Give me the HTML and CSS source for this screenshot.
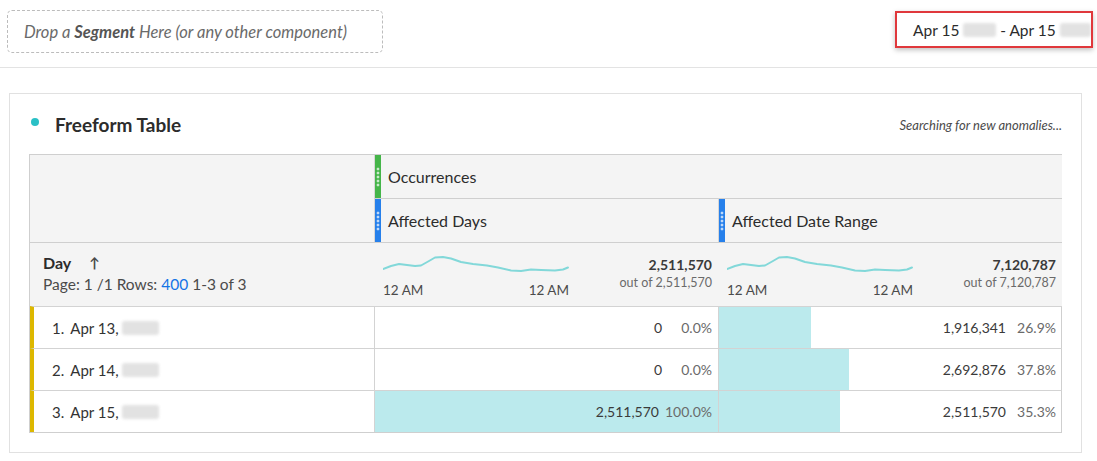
FILE: index.html
```html
<!DOCTYPE html>
<html>
<head>
<meta charset="utf-8">
<link rel="stylesheet" href="styles.css">
</head>
<body>
<div class="topbar">
  <div class="dropzone">Drop a <b>Segment</b> Here (or any other component)</div>
  <div class="daterange">Apr 15 <span class="blur b1"></span> - Apr 15 <span class="blur b2"></span></div>
</div>
<div class="panel">
  <div class="panel-head">
    <div class="title"><span class="dot"></span>Freeform Table</div>
    <div class="anom">Searching for new anomalies...</div>
  </div>
  <div class="ft">
    <div class="corner"></div>
    <div class="mh span2"><span class="marker green"><span class="dots"></span></span>Occurrences</div>
    <div class="mh r2"><span class="marker blue"><span class="dots"></span></span>Affected Days</div>
    <div class="mh r2"><span class="marker blue"><span class="dots"></span></span>Affected Date Range</div>

    <div class="dayhead">
      <div class="dayline"><b>Day</b><span class="arrow">&#8593;</span></div>
      <div class="pager">Page: 1 /1 Rows: <span class="link">400</span> 1-3 of 3</div>
    </div>
    <div class="spark">
      <div class="sp-left">
        <svg width="186" height="22" viewBox="0 0 186 22"><polyline points="0,17 8,14 16,12 24,13 32,14 38,13.5 46,9 52,5.5 60,5 68,6.5 78,10 90,12 104,13.5 115,15.5 128,18.5 138,19 148,17.5 158,18 172,18.5 180,17.5 185,15.5" fill="none" stroke="#82d8d9" stroke-width="2" stroke-linejoin="round" stroke-linecap="round"/></svg>
        <div class="axis"><span>12 AM</span><span>12 AM</span></div>
      </div>
      <div class="tot"><div class="big">2,511,570</div><div class="of">out of 2,511,570</div></div>
    </div>
    <div class="spark">
      <div class="sp-left">
        <svg width="186" height="22" viewBox="0 0 186 22"><polyline points="0,17 8,14 16,12 24,13 32,14 38,13.5 46,9 52,5.5 60,5 68,6.5 78,10 90,12 104,13.5 115,15.5 128,18.5 138,19 148,17.5 158,18 172,18.5 180,17.5 185,15.5" fill="none" stroke="#82d8d9" stroke-width="2" stroke-linejoin="round" stroke-linecap="round"/></svg>
        <div class="axis"><span>12 AM</span><span>12 AM</span></div>
      </div>
      <div class="tot"><div class="big">7,120,787</div><div class="of">out of 7,120,787</div></div>
    </div>

    <div class="rowh"><span class="num">1.</span> Apr 13,<span class="blur b3"></span></div>
    <div class="cell"><span class="val">0</span><span class="pct">0.0%</span></div>
    <div class="cell"><div class="bar" style="width:26.9%"></div><span class="val">1,916,341</span><span class="pct">26.9%</span></div>

    <div class="rowh"><span class="num">2.</span> Apr 14,<span class="blur b3"></span></div>
    <div class="cell"><span class="val">0</span><span class="pct">0.0%</span></div>
    <div class="cell"><div class="bar" style="width:37.8%"></div><span class="val">2,692,876</span><span class="pct">37.8%</span></div>

    <div class="rowh"><span class="num">3.</span> Apr 15,<span class="blur b3"></span></div>
    <div class="cell"><div class="bar" style="width:100%"></div><span class="val">2,511,570</span><span class="pct">100.0%</span></div>
    <div class="cell"><div class="bar" style="width:35.3%"></div><span class="val">2,511,570</span><span class="pct">35.3%</span></div>
  </div>
</div>
</body>
</html>
```

FILE: styles.css
```css
* { box-sizing: border-box; }
html, body { margin: 0; padding: 0; background: #fff; }
body { font-family: Lato, "Open Sans", sans-serif; color: #2c2c2c; width: 1097px; height: 461px; overflow: hidden; }

.topbar {
  height: 68px;
  border-bottom: 1px solid #e3e3e3;
  display: flex;
  justify-content: space-between;
  align-items: flex-start;
  padding: 10px 4px 0 7px;
}
.dropzone {
  width: 376px;
  height: 43px;
  border: 1px dashed #bcbcbc;
  border-radius: 5px;
  font-style: italic;
  font-size: 16.5px;
  color: #6a6a6a;
  display: flex;
  align-items: center;
  padding-left: 16px;
  white-space: pre;
}
.dropzone b { font-weight: 700; color: #555; }
.daterange {
  margin-top: 1px;
  width: 198px;
  height: 37px;
  border: 2px solid #e0383c;
  box-shadow: 0 2px 5px rgba(0,0,0,0.25);
  font-size: 15.5px;
  color: #2c2c2c;
  display: flex;
  align-items: center;
  padding-left: 16px;
  white-space: pre;
  overflow: hidden;
}
.blur {
  display: inline-block;
  height: 14px;
  background: #e2e2e2;
  border-radius: 3px;
  filter: blur(1.5px);
}
.b1 { width: 40px; }
.b2 { width: 38px; }
.b3 { width: 37px; margin-left: 3px; }

.panel {
  margin: 25px 15px 0 9px;
  border: 1px solid #e1e1e1;
  padding: 0 19px 19px 19px;
}
.panel-head {
  height: 60px;
  display: flex;
  align-items: center;
  justify-content: space-between;
}
.title {
  display: flex;
  align-items: center;
  font-size: 19px;
  font-weight: 700;
  color: #2c2c2c;
}
.dot {
  width: 8px;
  height: 8px;
  border-radius: 50%;
  background: #2ac0c6;
  margin: 0 16px 4px 2px;
}
.anom {
  font-size: 13px;
  font-style: italic;
  color: #4b4b4b;
  margin-top: 2px;
}

.ft {
  display: grid;
  grid-template-columns: 344px 344px 344px;
  grid-template-rows: 43px 44px 64px 42px 42px 42px;
  border: 1px solid #cfcfcf;
}
.corner {
  grid-row: 1 / 3;
  background: #f4f4f4;
}
.mh {
  background: #f4f4f4;
  border-left: 1px solid #d6d6d6;
  display: flex;
  align-items: center;
  font-size: 16px;
  color: #2c2c2c;
}
.mh.span2 { grid-column: 2 / 4; }
.mh.r2 { border-top: 1px solid #cfcfcf; }
.marker {
  flex: none;
  align-self: stretch;
  width: 6px;
  margin-right: 7px;
  display: flex;
  align-items: center;
  justify-content: center;
}
.green { background: #45b549; }
.blue { background: #2680eb; }
.dots {
  width: 6px;
  height: 20px;
  background-image: radial-gradient(circle, rgba(255,255,255,0.7) 1.2px, transparent 1.7px);
  background-size: 6px 4px;
}

.dayhead {
  background: #f4f4f4;
  border-top: 1px solid #cfcfcf;
  padding: 8px 0 0 13px;
}
.dayline {
  font-size: 16px;
  height: 22px;
  display: flex;
  align-items: center;
}
.dayline b { font-weight: 700; color: #2c2c2c; }
.arrow { margin-left: 18px; font-size: 14px; font-weight: 700; color: #4b4b4b; }
.pager {
  margin-top: 2px;
  font-size: 15.5px;
  color: #4b4b4b;
}
.link { color: #1473e6; }

.spark {
  background: #f4f4f4;
  border-top: 1px solid #cfcfcf;
  display: flex;
  justify-content: space-between;
  padding: 9px 6px 0 9px;
}
.sp-left { width: 186px; }
.sp-left svg { display: block; }
.axis {
  display: flex;
  justify-content: space-between;
  font-size: 13.5px;
  color: #4b4b4b;
  margin-top: 8px;
}
.tot { text-align: right; padding-top: 4px; }
.big { font-size: 14px; font-weight: 700; color: #3a3a3a; }
.of { font-size: 12.5px; color: #6a6a6a; margin-top: 2px; }

.rowh {
  border-top: 1px solid #d3d3d3;
  border-left: 4px solid #ddb800;
  display: flex;
  align-items: center;
  padding-left: 18px;
  font-size: 15px;
  color: #333;
  white-space: pre;
}
.num { width: 15px; }
.cell {
  position: relative;
  border-top: 1px solid #d3d3d3;
  border-left: 1px solid #d3d3d3;
  display: flex;
  align-items: center;
  justify-content: flex-end;
  padding-right: 6px;
  font-size: 14px;
}
.bar {
  position: absolute;
  left: 0;
  top: 0;
  bottom: 0;
  background: #bbeaed;
}
.val { position: relative; color: #3a3a3a; }
.pct { position: relative; color: #6a6a6a; margin-left: 6px; min-width: 44px; text-align: right; }
```
